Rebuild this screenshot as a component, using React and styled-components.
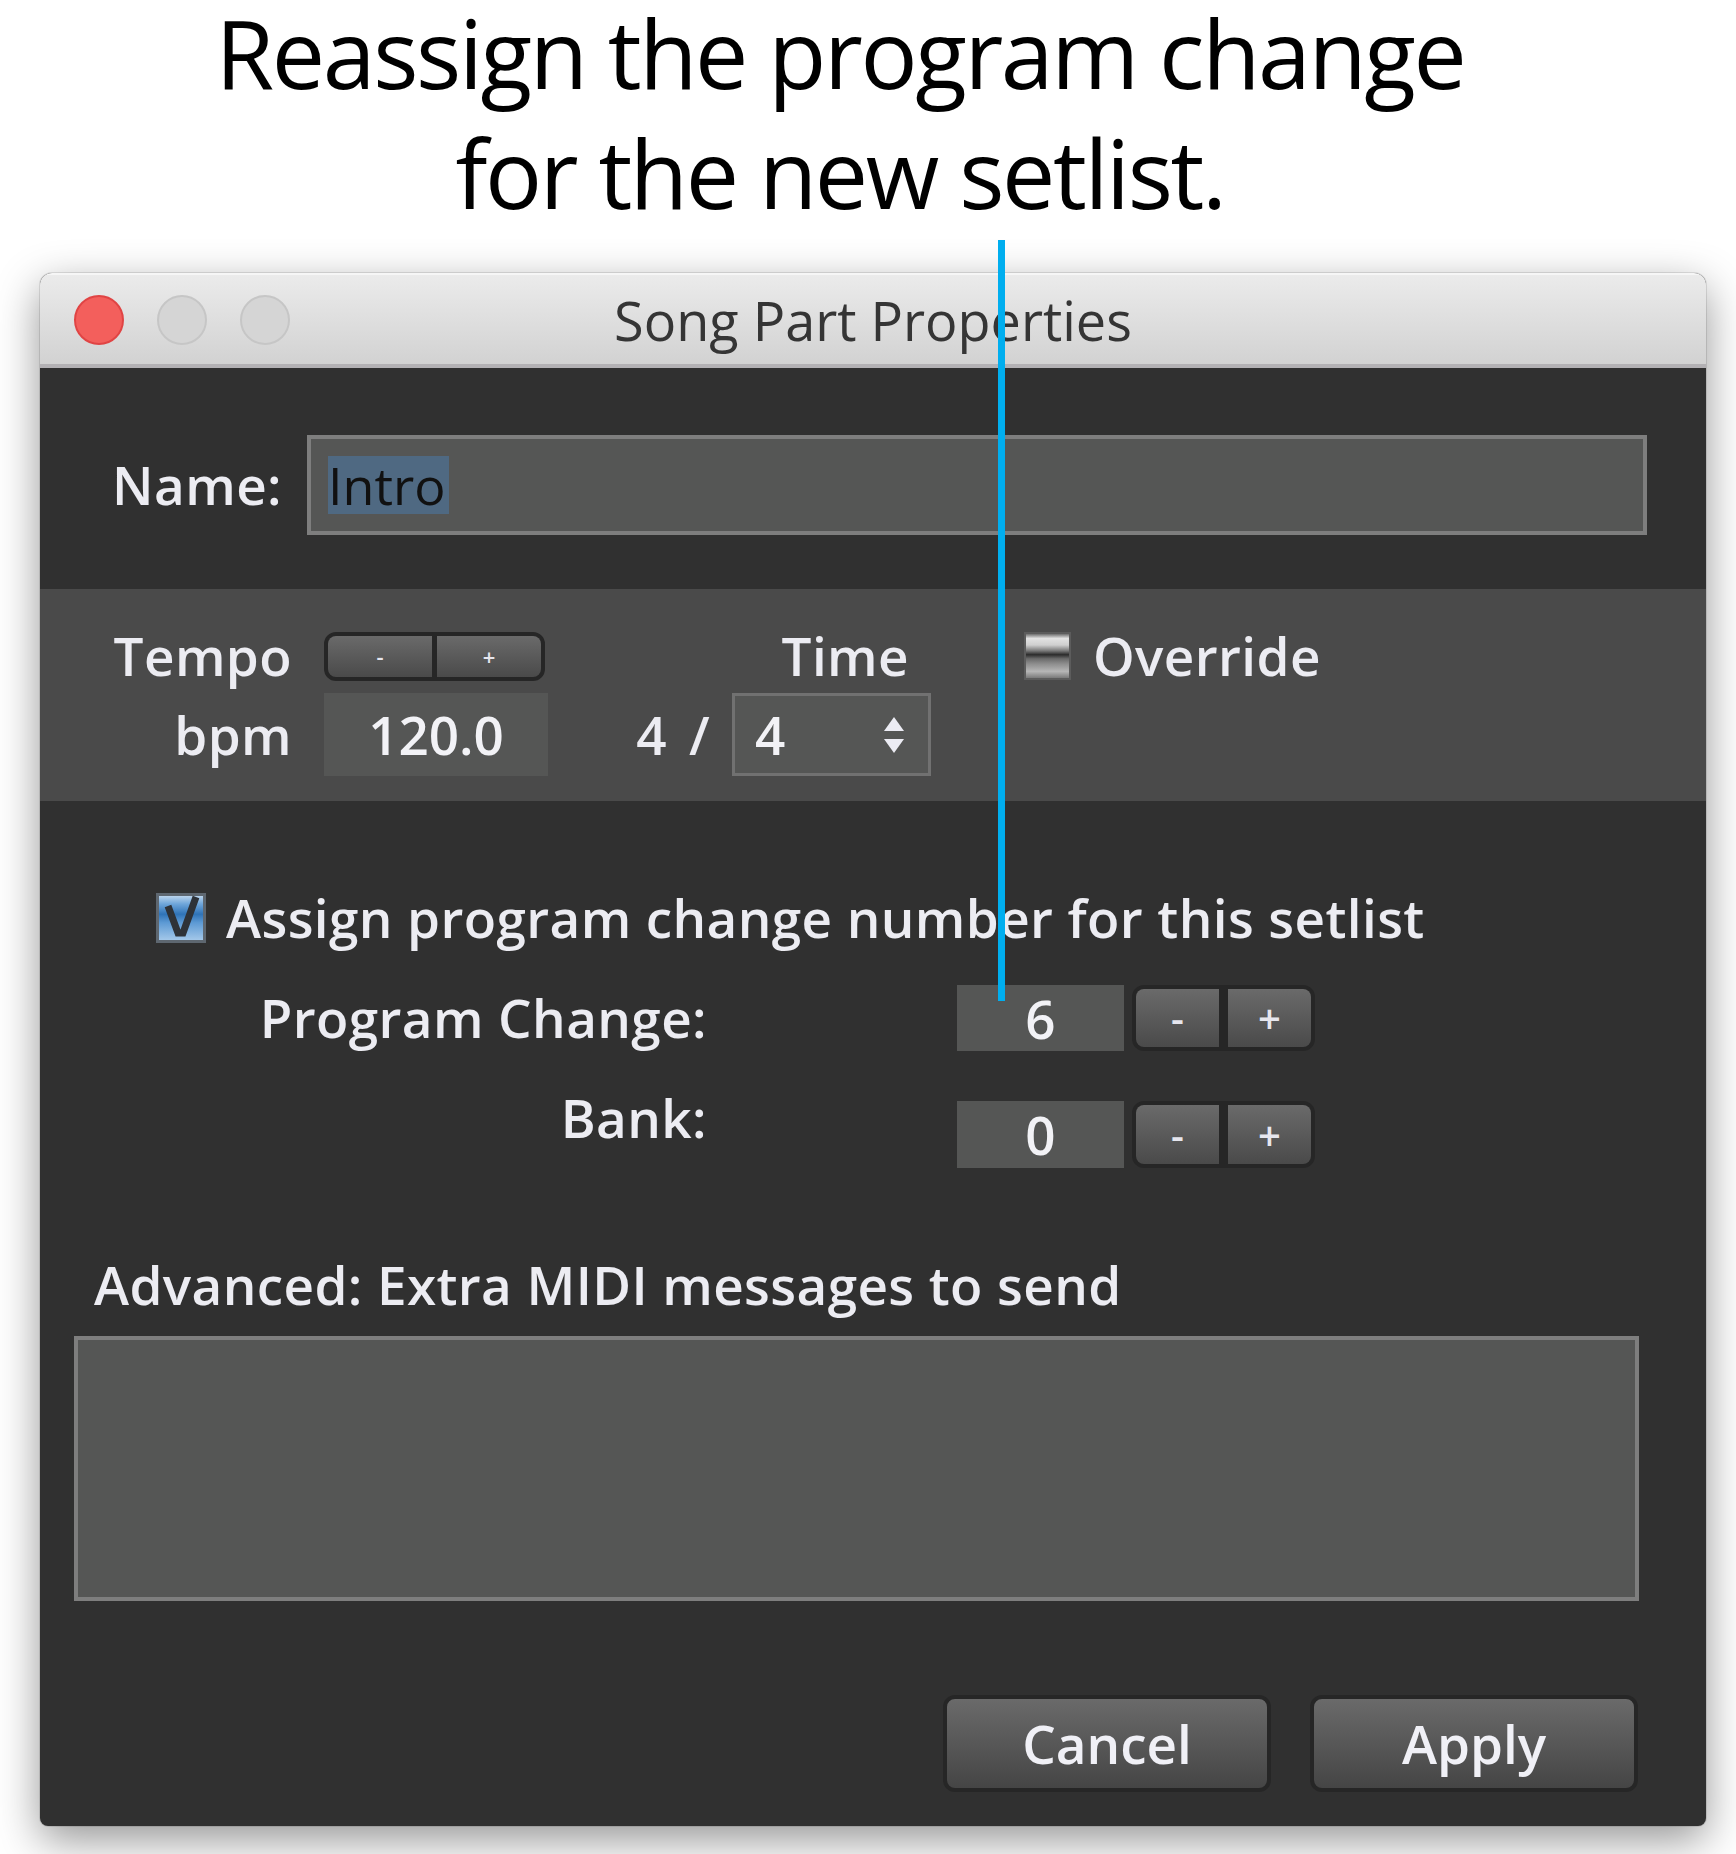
import React from 'react'
import styled, { createGlobalStyle } from 'styled-components'

const GlobalStyle = createGlobalStyle`
  html, body {
    margin: 0;
    padding: 0;
    background: #ffffff;
  }
  body {
    font-family: "Open Sans", "Noto Sans", sans-serif;
  }
  * { box-sizing: border-box; }
`

const Page = styled.div`
  position: relative;
  width: 1736px;
  height: 1854px;
  overflow: hidden;
  background: #ffffff;
`

const Heading = styled.h1`
  margin: 0;
  width: 1680px;
  text-align: center;
  font-size: 95px;
  font-weight: 400;
  color: #000;
  letter-spacing: -2.4px;
`

const HeadLine = styled.span`
  display: block;
  line-height: ${p => p.lh}px;
`

// annotation line that points down at the program change field
const Callout = styled.div`
  position: absolute;
  left: 998px;
  top: 240px;
  width: 7px;
  height: 761px;
  background: #00aeef;
  z-index: 5;
`

const Window = styled.div`
  margin: 33px 0 0 40px;
  width: 1666px;
  height: 1553px;
  display: flex;
  flex-direction: column;
  background: #303030;
  border-radius: 12px 12px 8px 8px;
  overflow: hidden;
  box-shadow: 0 14px 44px rgba(0, 0, 0, 0.42), 0 0 0 1px rgba(0, 0, 0, 0.1);

  & > * { flex: none; }
`

const TitleBar = styled.div`
  position: relative;
  height: 95px;
  display: flex;
  align-items: center;
  padding-left: 34px;
  gap: 33px;
  background: linear-gradient(#ebebeb, #d2d2d2);
  border-top: 2px solid #f6f6f6;
  border-bottom: 4px solid #b3b1b4;
`

const Light = styled.span`
  width: 50px;
  height: 50px;
  border-radius: 50%;
  background: ${p => (p.red ? '#f35f5c' : '#d5d5d5')};
  border: 2px solid ${p => (p.red ? '#e04444' : '#c6c6c6')};
`

const Title = styled.div`
  position: absolute;
  left: 0;
  right: 0;
  text-align: center;
  font-size: 54px;
  color: #353535;
  pointer-events: none;
`

const NameRow = styled.div`
  display: flex;
  align-items: center;
  gap: 25px;
  padding: 67px 59px 54px 42px;
`

const Label = styled.span`
  font-size: 53px;
  font-weight: 600;
  line-height: 62px;
  letter-spacing: 0.4px;
  color: #ececf2;
  white-space: nowrap;
`

const NameLabel = styled(Label)`
  width: 200px;
  text-align: right;
`

const NameInput = styled.div`
  flex: 1;
  height: 100px;
  display: flex;
  align-items: center;
  padding-left: 17px;
  background: #555655;
  border: 4px solid #7e7e7e;
`

const Selected = styled.span`
  background: #4f6982;
  color: #111;
  font-size: 52px;
  line-height: 58px;
  padding-right: 4px;
`

const TempoBand = styled.div`
  display: grid;
  grid-template-columns: 192px 224px 351px auto;
  grid-template-rows: 58px 83px;
  column-gap: 32px;
  row-gap: 8px;
  align-items: center;
  padding: 38px 0 25px 60px;
  background: #4a4a4a;
`

const Right = styled.div`
  display: flex;
  justify-content: flex-end;
  align-items: center;
  gap: ${p => p.gap || 0}px;
  padding-right: ${p => p.pr || 0}px;
`

const OverrideWrap = styled.div`
  display: flex;
  align-items: center;
  gap: 22px;
  margin-left: 61px;
`

const GrayBox = styled.span`
  width: 47px;
  height: 48px;
  border: 2px solid #5c5c5c;
  background: linear-gradient(
    #6e6e6e 0%,
    #e2e2e2 10%,
    #cfcfcf 25%,
    #7a7a7a 38%,
    #2c2c2c 47%,
    #6a6a6a 56%,
    #8e8e8e 68%,
    #b6b6b6 85%,
    #7a7a7a 100%
  );
`

const Stepper = styled.div`
  display: flex;
  width: ${p => p.w}px;
  height: ${p => p.h}px;
  margin-left: ${p => p.ml || 0}px;
  border: 4px solid #262626;
  border-radius: 12px;
  overflow: hidden;
  background: #262626;
  gap: ${p => p.divider}px;
`

const StepButton = styled.span`
  flex: 1;
  display: flex;
  align-items: center;
  justify-content: center;
  background: linear-gradient(#6a6a6a, #4a4a4a);
  color: #e6e6ee;
  font-size: ${p => p.fs}px;
  font-weight: 600;
  line-height: 1;
`

const NumField = styled.div`
  width: ${p => p.w}px;
  height: ${p => p.h}px;
  display: flex;
  align-items: center;
  justify-content: center;
  background: #555655;
  color: #f2f2f6;
  font-size: 53px;
  font-weight: 600;
`

const Select = styled.div`
  width: 199px;
  height: 83px;
  display: flex;
  align-items: center;
  justify-content: space-between;
  padding: 0 22px 0 20px;
  background: #555655;
  border: 3px solid #717171;
  color: #f2f2f6;
  font-size: 53px;
  font-weight: 600;
`

const AssignSection = styled.div`
  padding: 92px 0 0 116px;
  display: flex;
  flex-direction: column;
`

const CheckRow = styled.div`
  display: flex;
  align-items: center;
  gap: 20px;
  height: 50px;
`

const FieldRow = styled.div`
  display: flex;
  align-items: center;
  margin-top: ${p => p.mt}px;
`

const RowLabel = styled(Label)`
  width: 551px;
  text-align: right;
  margin-right: 250px;
  transform: translateY(-${p => p.lift || 0}px);
`

const AdvancedLabel = styled(Label)`
  display: block;
  margin: 86px 0 0 54px;
`

const TextArea = styled.div`
  margin: 20px 67px 0 34px;
  height: 265px;
  background: #555655;
  border: 4px solid #7e7e7e;
`

const Footer = styled.div`
  display: flex;
  justify-content: flex-end;
  gap: 39px;
  padding: 94px 68px 0 0;
`

const Button = styled.button`
  width: 328px;
  height: 97px;
  border: 4px solid #262626;
  border-radius: 12px;
  background: linear-gradient(#6a6a6a, #454545);
  color: #f0f0f6;
  font-family: inherit;
  font-size: 53px;
  font-weight: 600;
  padding: 0;
`

const Checked = () => (
  <svg width="50" height="50" viewBox="0 0 50 50">
    <defs>
      <linearGradient id="cb" x1="0" y1="0" x2="0" y2="1">
        <stop offset="0" stopColor="#c8dcef" />
        <stop offset="0.2" stopColor="#6fa6da" />
        <stop offset="0.42" stopColor="#2f73b8" />
        <stop offset="0.6" stopColor="#5d9ad4" />
        <stop offset="1" stopColor="#a9cbeb" />
      </linearGradient>
    </defs>
    <rect x="1.5" y="1.5" width="47" height="47" fill="url(#cb)" stroke="#5e6770" strokeWidth="3" />
    <path d="M12 13 L22 40 L27 40 L40 4" fill="none" stroke="#2e3238" strokeWidth="7" strokeLinejoin="miter" />
  </svg>
)

const Arrows = () => (
  <svg width="24" height="40" viewBox="0 0 24 40">
    <path d="M12 2 L22 16 L2 16 Z" fill="#ececf4" />
    <path d="M2 24 L22 24 L12 38 Z" fill="#ececf4" />
  </svg>
)

const App = () => (
  <Page>
    <GlobalStyle />
    <Heading>
      <HeadLine lh={104}>Reassign the program change</HeadLine>
      <HeadLine lh={136}>for the new setlist.</HeadLine>
    </Heading>
    <Callout />
    <Window>
      <TitleBar>
        <Light red />
        <Light />
        <Light />
        <Title>Song Part Properties</Title>
      </TitleBar>

      <NameRow>
        <NameLabel>Name:</NameLabel>
        <NameInput>
          <Selected>Intro</Selected>
        </NameInput>
      </NameRow>

      <TempoBand>
        <Right>
          <Label>Tempo</Label>
        </Right>
        <Stepper w={221} h={49} divider={5}>
          <StepButton fs={22}>-</StepButton>
          <StepButton fs={22}>+</StepButton>
        </Stepper>
        <Right pr={22}>
          <Label>Time</Label>
        </Right>
        <OverrideWrap>
          <GrayBox />
          <Label>Override</Label>
        </OverrideWrap>

        <Right>
          <Label>bpm</Label>
        </Right>
        <NumField w={224} h={83}>120.0</NumField>
        <Right gap={22}>
          <Label>4</Label>
          <Label>/</Label>
          <Select>
            <span>4</span>
            <Arrows />
          </Select>
        </Right>
        <span />
      </TempoBand>

      <AssignSection>
        <CheckRow>
          <Checked />
          <Label>Assign program change number for this setlist</Label>
        </CheckRow>
        <FieldRow mt={42}>
          <RowLabel>Program Change:</RowLabel>
          <NumField w={167} h={66}>6</NumField>
          <Stepper w={183} h={66} divider={9} ml={8}>
            <StepButton fs={40}>-</StepButton>
            <StepButton fs={40}>+</StepButton>
          </Stepper>
        </FieldRow>
        <FieldRow mt={50}>
          <RowLabel lift={17}>Bank:</RowLabel>
          <NumField w={167} h={67}>0</NumField>
          <Stepper w={183} h={67} divider={9} ml={8}>
            <StepButton fs={40}>-</StepButton>
            <StepButton fs={40}>+</StepButton>
          </Stepper>
        </FieldRow>
      </AssignSection>

      <AdvancedLabel>Advanced: Extra MIDI messages to send</AdvancedLabel>
      <TextArea />

      <Footer>
        <Button>Cancel</Button>
        <Button>Apply</Button>
      </Footer>
    </Window>
  </Page>
)

export default App
